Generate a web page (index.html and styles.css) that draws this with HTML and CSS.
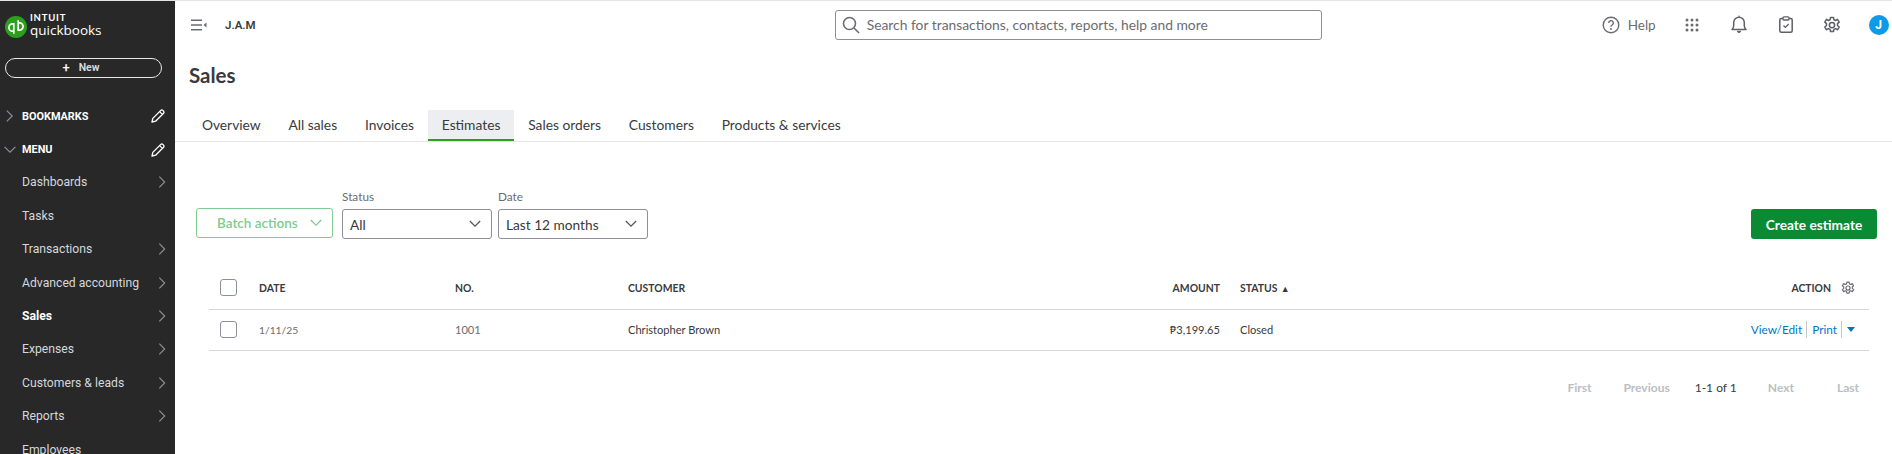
FILE: index.html
```html
<!DOCTYPE html>
<html lang="en">
<head>
<meta charset="utf-8">
<title>Sales</title>
<link rel="stylesheet" href="styles.css">
</head>
<body>
<div class="app">
  <aside class="sidebar">
    <div class="brand">
      <svg class="brand-mark" viewBox="0 0 22 22" width="22" height="22"><circle cx="11" cy="11" r="11" fill="#2ca01c"/><g fill="none" stroke="#fff" stroke-width="1.7"><path d="M9.6 15.2H7.6a3.6 3.6 0 0 1 0-7.4h1.2v10"/><path d="M12.4 6.8H14.4a3.6 3.6 0 0 1 0 7.4h-1.2V4.2"/></g></svg>
      <div class="brand-text"><span class="brand-intuit">INTUIT</span><span class="brand-name">quickbooks</span></div>
    </div>
    <button class="new-btn"><span class="new-plus">+</span>New</button>
    <div class="side-section section-first">
      <svg class="chev-sec" viewBox="0 0 10 14" width="9" height="14"><path d="M2 1l6 6-6 6" fill="none" stroke="#8d9096" stroke-width="1.3"/></svg>
      <span class="sec-label">BOOKMARKS</span>
      <svg class="pencil" viewBox="0 0 16 16" width="16" height="16"><path d="M2 14l.8-3.6L10.8 2.4a1.4 1.4 0 0 1 2 0l.8.8a1.4 1.4 0 0 1 0 2L5.6 13.2zM9.6 3.6l2.8 2.8" fill="none" stroke="#fff" stroke-width="1.3" stroke-linejoin="round"/></svg>
    </div>
    <div class="side-section">
      <svg class="chev-sec chev-open" viewBox="0 0 14 10" width="14" height="9"><path d="M1 2l6 6 6-6" fill="none" stroke="#8d9096" stroke-width="1.3"/></svg>
      <span class="sec-label">MENU</span>
      <svg class="pencil" viewBox="0 0 16 16" width="16" height="16"><path d="M2 14l.8-3.6L10.8 2.4a1.4 1.4 0 0 1 2 0l.8.8a1.4 1.4 0 0 1 0 2L5.6 13.2zM9.6 3.6l2.8 2.8" fill="none" stroke="#fff" stroke-width="1.3" stroke-linejoin="round"/></svg>
    </div>
    <nav class="side-nav">
      <a class="nav-item">Dashboards<svg class="chev" viewBox="0 0 9 14" width="8" height="14"><path d="M1.5 1l6 6-6 6" fill="none" stroke="#8d9096" stroke-width="1.3"/></svg></a>
      <a class="nav-item">Tasks</a>
      <a class="nav-item">Transactions<svg class="chev" viewBox="0 0 9 14" width="8" height="14"><path d="M1.5 1l6 6-6 6" fill="none" stroke="#8d9096" stroke-width="1.3"/></svg></a>
      <a class="nav-item">Advanced accounting<svg class="chev" viewBox="0 0 9 14" width="8" height="14"><path d="M1.5 1l6 6-6 6" fill="none" stroke="#8d9096" stroke-width="1.3"/></svg></a>
      <a class="nav-item nav-active">Sales<svg class="chev" viewBox="0 0 9 14" width="8" height="14"><path d="M1.5 1l6 6-6 6" fill="none" stroke="#8d9096" stroke-width="1.3"/></svg></a>
      <a class="nav-item">Expenses<svg class="chev" viewBox="0 0 9 14" width="8" height="14"><path d="M1.5 1l6 6-6 6" fill="none" stroke="#8d9096" stroke-width="1.3"/></svg></a>
      <a class="nav-item">Customers &amp; leads<svg class="chev" viewBox="0 0 9 14" width="8" height="14"><path d="M1.5 1l6 6-6 6" fill="none" stroke="#8d9096" stroke-width="1.3"/></svg></a>
      <a class="nav-item">Reports<svg class="chev" viewBox="0 0 9 14" width="8" height="14"><path d="M1.5 1l6 6-6 6" fill="none" stroke="#8d9096" stroke-width="1.3"/></svg></a>
      <a class="nav-item">Employees</a>
    </nav>
  </aside>
  <main class="main">
    <header class="topbar">
      <svg class="collapse" viewBox="0 0 16 12" width="16" height="12"><path d="M0 1.2h11M0 6h11M0 10.800h11" stroke="#6b6c72" stroke-width="1.6"/><path d="M12.500 6l3-2.500v5z" fill="#6b6c72"/></svg>
      <span class="company">J.A.M</span>
      <div class="search">
        <svg viewBox="0 0 18 18" width="18" height="18"><circle cx="7.500" cy="7.500" r="6" fill="none" stroke="#6b6c72" stroke-width="1.6"/><path d="M12 12l5 5" stroke="#6b6c72" stroke-width="1.6"/></svg>
        <span>Search for transactions, contacts, reports, help and more</span>
      </div>
      <div class="top-actions">
        <svg class="ic-help" viewBox="0 0 18 18" width="18" height="18"><circle cx="9" cy="9" r="7.800" fill="none" stroke="#6b6c72" stroke-width="1.4"/><path d="M6.700 7a2.300 2.300 0 1 1 3.400 2c-.8.500-1.100.9-1.100 1.800" fill="none" stroke="#6b6c72" stroke-width="1.400"/><circle cx="9" cy="13" r=".9" fill="#6b6c72"/></svg>
        <span class="help-label">Help</span>
        <svg class="ic-grid" viewBox="0 0 14 14" width="14" height="14" fill="#6b6c72"><circle cx="2" cy="2" r="1.500"/><circle cx="7" cy="2" r="1.500"/><circle cx="12" cy="2" r="1.500"/><circle cx="2" cy="7" r="1.500"/><circle cx="7" cy="7" r="1.500"/><circle cx="12" cy="7" r="1.500"/><circle cx="2" cy="12" r="1.500"/><circle cx="7" cy="12" r="1.500"/><circle cx="12" cy="12" r="1.500"/></svg>
        <svg class="ic-bell" viewBox="0 0 16 19" width="16" height="19"><path d="M1 14.500c1.200-1 1.700-2 1.700-4V7.500a5.300 5.300 0 0 1 10.600 0v3c0 2 .5 3 1.700 4z" fill="none" stroke="#5f6066" stroke-width="1.500" stroke-linejoin="round"/><path d="M6.300 16.300a1.800 1.800 0 0 0 3.400 0zM8 .5v1.800" fill="#5f6066" stroke="#5f6066" stroke-width="1"/></svg>
        <svg class="ic-clip" viewBox="0 0 14 17" width="14" height="17"><rect x=".8" y="2.500" width="12.400" height="13.700" rx="1.500" fill="none" stroke="#5f6066" stroke-width="1.500"/><rect x="4" y=".8" width="6" height="3.200" rx="1" fill="#fff" stroke="#5f6066" stroke-width="1.300"/><path d="M4.500 9.500l1.900 1.900 3.300-3.400" fill="none" stroke="#5f6066" stroke-width="1.300"/></svg>
        <svg class="ic-gear" viewBox="0 0 24 24" width="18" height="18"><path d="M10 2h4l.6 3 2.100 1 2.700-1.500 2.200 3.600-2.300 2 .1 1.300-.1 1.300 2.300 2-2.200 3.600-2.700-1.500-2.100 1-.6 3h-4l-.6-3-2.100-1-2.700 1.500-2.200-3.600 2.300-2-.1-1.300.1-1.300-2.300-2 2.200-3.600 2.700 1.500 2.100-1z" fill="none" stroke="#5f6066" stroke-width="2" stroke-linejoin="round"/><circle cx="12" cy="12" r="3.500" fill="none" stroke="#5f6066" stroke-width="2"/></svg>
        <span class="avatar">J</span>
      </div>
    </header>
    <h1 class="page-title">Sales</h1>
    <div class="tabs">
      <a class="tab">Overview</a>
      <a class="tab">All sales</a>
      <a class="tab">Invoices</a>
      <a class="tab tab-active">Estimates</a>
      <a class="tab">Sales orders</a>
      <a class="tab">Customers</a>
      <a class="tab">Products &amp; services</a>
    </div>
    <div class="toolbar">
      <button class="batch">Batch actions<svg viewBox="0 0 14 9" width="12" height="8"><path d="M1 1l6 6 6-6" fill="none" stroke="#7fcb92" stroke-width="1.500"/></svg></button>
      <div class="field">
        <label class="field-label">Status</label>
        <div class="select"><span>All</span><svg viewBox="0 0 14 9" width="12" height="8"><path d="M1 1l6 6 6-6" fill="none" stroke="#55565c" stroke-width="1.500"/></svg></div>
      </div>
      <div class="field">
        <label class="field-label">Date</label>
        <div class="select"><span>Last 12 months</span><svg viewBox="0 0 14 9" width="12" height="8"><path d="M1 1l6 6 6-6" fill="none" stroke="#55565c" stroke-width="1.500"/></svg></div>
      </div>
      <button class="create">Create estimate</button>
    </div>
    <div class="table">
      <div class="row row-head">
        <span class="cell-check"><span class="checkbox"></span></span>
        <span>DATE</span>
        <span>NO.</span>
        <span>CUSTOMER</span>
        <span class="cell-amount">AMOUNT</span>
        <span class="cell-status">STATUS <span class="sort">▲</span></span>
        <span class="cell-action">ACTION<svg viewBox="0 0 24 24" width="14" height="14"><path d="M10 2h4l.6 3 2.100 1 2.700-1.500 2.200 3.600-2.300 2 .1 1.300-.1 1.300 2.300 2-2.200 3.600-2.700-1.500-2.100 1-.6 3h-4l-.6-3-2.100-1-2.700 1.500-2.200-3.600 2.300-2-.1-1.300.1-1.300-2.300-2 2.200-3.600 2.700 1.500 2.100-1z" fill="none" stroke="#6b6c72" stroke-width="2" stroke-linejoin="round"/><circle cx="12" cy="12" r="3.500" fill="none" stroke="#6b6c72" stroke-width="2"/></svg></span>
      </div>
      <div class="row row-body">
        <span class="cell-check"><span class="checkbox"></span></span>
        <span class="muted cell-date">1/11/25</span>
        <span class="muted">1001</span>
        <span>Christopher Brown</span>
        <span class="cell-amount">₱3,199.65</span>
        <span class="cell-status">Closed</span>
        <span class="cell-action links"><a>View/Edit</a><a class="link-sep">Print</a><span class="link-sep caret"></span></span>
      </div>
    </div>
    <div class="pager">
      <span class="pg pg-first">First</span>
      <span class="pg pg-prev">Previous</span>
      <span class="pg-count">1-1 of 1</span>
      <span class="pg pg-next">Next</span>
      <span class="pg pg-last">Last</span>
    </div>
  </main>
</div>
</body>
</html>
```
FILE: styles.css
```css
* { box-sizing: border-box; }
html, body { margin: 0; height: 100%; overflow: hidden; background: #fff; }
.app {
  display: flex;
  height: 454px;
  border-top: 1px solid #e3e5e8;
  font-family: Lato, "Noto Sans", sans-serif;
  color: #393a3d;
}
.sidebar {
  flex: 0 0 175px;
  background: #282828;
  overflow: hidden;
  font-family: Roboto, sans-serif;
}
.brand { display: flex; align-items: flex-start; gap: 3px; padding: 15px 0 0 5px; height: 57px; }
.brand-mark { flex: none; }
.brand-text { display: flex; flex-direction: column; color: #fff; margin-top: -3px; }
.brand-intuit { font: 700 9.500px/10px Lato, sans-serif; letter-spacing: 0.8px; }
.brand-name { font: 500 13.500px/15px "Open Sans", sans-serif; }
.new-btn {
  display: flex; align-items: center; justify-content: center; gap: 9px;
  width: 157px; height: 20px; margin-left: 5px;
  background: transparent; border: 1px solid #e8e8e8; border-radius: 10px;
  color: #d4d7dc; font: 700 10.500px Roboto, sans-serif; padding: 0 5px 1px 0;
}
.new-plus { font-size: 13px; line-height: 12px; color: #fff; font-weight: 500; }
.side-section {
  display: flex; align-items: center; height: 33.400px; padding-left: 5px;
  color: #fff;
}
.section-first { margin-top: 21.500px; }
.chev-sec { flex: none; margin-right: 8px; }
.chev-open { margin-left: -2px; margin-right: 5px; }
.sec-label { font-size: 10.900px; font-weight: 700; flex: 1; }
.pencil { flex: none; margin-right: 9px; }
.side-nav { display: flex; flex-direction: column; margin-top: -0.500px; }
.nav-item {
  display: flex; align-items: center; justify-content: space-between;
  flex: none;
  height: 33.400px; padding: 0 9px 0 22px;
  font-size: 12.200px; color: #d4d7dc;
}
.nav-active { color: #fff; font-weight: 700; }
.chev { flex: none; }
.main { flex: 1; min-width: 0; display: flex; flex-direction: column; }
.topbar { display: flex; align-items: center; height: 47px; padding-left: 16px; flex: none; }
.collapse { flex: none; }
.company { margin-left: 18px; font: 600 11.500px Roboto, sans-serif; color: #393a3d; }
.search {
  display: flex; align-items: center; gap: 7px;
  width: 487px; height: 30px; margin-left: 579px; padding-left: 6px;
  border: 1px solid #8d9096; border-radius: 3px;
  font-size: 13.850px; color: #6b6c72;
}
.top-actions { display: flex; align-items: center; margin-left: 280px; }
.help-label { margin-left: 8px; font-size: 13.500px; color: #6b6c72; }
.ic-grid { margin-left: 29px; }
.ic-bell { margin-left: 32px; }
.ic-clip { margin-left: 32px; }
.ic-gear { margin-left: 30px; }
.avatar {
  display: flex; align-items: center; justify-content: center;
  width: 20px; height: 20px; margin-left: 28px; border-radius: 50%;
  background: #0f9ae8; color: #fff; font: 700 12px Roboto, sans-serif;
}
.page-title { margin: 12px 0 0 14px; font-size: 20.500px; line-height: 30px; font-weight: 700; color: #393a3d; }
.tabs { display: flex; margin-top: 20px; height: 32px; padding-left: 13px; border-bottom: 1px solid #e3e5e8; flex: none; }
.tab { display: flex; align-items: center; height: 31px; padding: 0 13.900px 2px; font-size: 13.800px; color: #393a3d; }
.tab-active { background: #eceef1; border-bottom: 2px solid #2ca01c; padding-bottom: 0; }
.toolbar { display: flex; align-items: flex-end; margin-top: 47px; padding: 0 15px 0 21px; flex: none; }
.batch {
  display: flex; align-items: center; justify-content: space-between;
  width: 137px; height: 30px; margin-bottom: 1px; padding: 0 10px 0 20px;
  background: #fff; border: 1px solid #7fcb92; border-radius: 3px;
  color: #7fcb92; font: 600 13.500px Lato, sans-serif;
}
.field { display: flex; flex-direction: column; gap: 5px; margin-left: 9px; }
.field + .field { margin-left: 6px; }
.field-label { font-size: 11.800px; line-height: 15px; color: #6b6c72; }
.select {
  display: flex; align-items: center; justify-content: space-between;
  width: 150px; height: 30px; padding: 0 10px 0 7px;
  border: 1px solid #8d9096; border-radius: 3px; font-size: 13.700px; color: #393a3d;
}
.create {
  margin-left: auto; width: 126px; height: 30px;
  background: #0a8a33; border: 0; border-radius: 3px;
  color: #fff; font: 700 13.700px Lato, sans-serif;
}
.table { margin: 27px 23px 0 34px; flex: none; }
.row {
  display: grid;
  grid-template-columns: 50px 196px 173px 1fr 192px 438px 210px;
  align-items: center;
  border-bottom: 1px solid #d4d7dc;
  font-size: 11.100px;
}
.row-head { height: 44px; font-size: 10.400px; font-weight: 700; color: #393a3d; }
.row-body { height: 41px; padding-bottom: 1px; }
.muted { color: #6b6c72; }
.cell-date { font-size: 10.300px; }
.cell-check { padding-left: 11px; display: flex; }
.checkbox { width: 17px; height: 17px; border: 1px solid #8d9096; border-radius: 3px; }
.cell-amount { text-align: right; padding-right: 1px; }
.cell-status { padding-left: 19px; }
.sort { font-size: 9px; margin-left: 1px; }
.cell-action { display: flex; align-items: center; justify-content: flex-end; gap: 10px; padding-right: 14px; }
.links { gap: 0; padding-right: 14px; color: #0077c5; font-size: 11.800px; }
.link-sep { display: flex; align-items: center; border-left: 1px solid #c4c6ca; margin-left: 4px; padding-left: 5px; height: 17px; }
.caret { position: relative; width: 14px; }
.caret::after {
  content: ""; position: absolute; left: 5px; top: 6px;
  border: 4px solid transparent; border-top: 5px solid #0077c5; border-bottom: 0;
}
.pager { display: flex; align-items: center; margin-top: 27px; height: 18px; padding-right: 33px; justify-content: flex-end; font-size: 12px; flex: none; }
.pg { color: #babec5; font-weight: 700; }
.pg-prev { margin-left: 32px; }
.pg-count { margin-left: 25px; color: #393a3d; }
.pg-next { margin-left: 31px; }
.pg-last { margin-left: 43px; }
```
